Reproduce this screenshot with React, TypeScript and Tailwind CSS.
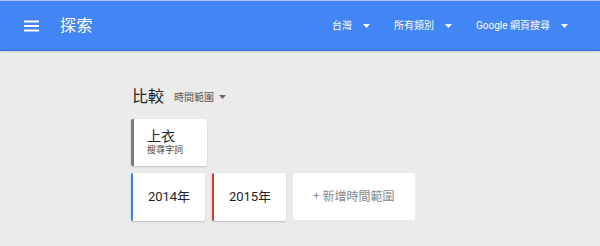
const nav = ['台灣', '所有類別', 'Google 網頁搜尋'];

const years = [
  { label: '2014年', color: 'border-[#3b7df2]' },
  { label: '2015年', color: 'border-[#d93a2e]' },
];

function Caret({ className = '' }: { className?: string }) {
  return (
    <svg width="7" height="4" viewBox="0 0 7 4" className={className}>
      <path d="M0 0h7L3.5 4z" fill="currentColor" />
    </svg>
  );
}

export default function App() {
  return (
    <div
      className="w-[600px] h-[246px] bg-[#ebebeb] overflow-hidden"
      style={{ fontFamily: 'Roboto, "Noto Sans CJK TC", sans-serif' }}
    >
      {/* Header */}
      <header className="h-[51px] bg-[#4285f4] border-t border-t-[#a9c5f7] border-b border-b-[#2f6fd9] flex items-center text-white shadow-[0_1px_2px_rgba(0,0,0,0.15)]">
        <div className="pl-[24px] pr-[21px] flex items-center">
          <svg width="15" height="12" viewBox="0 0 15 12">
            <rect x="0" y="0.5" width="15" height="2" fill="white" />
            <rect x="0" y="5" width="15" height="2" fill="white" />
            <rect x="0" y="9.5" width="15" height="2" fill="white" />
          </svg>
        </div>
        <span className="text-[16px] leading-none tracking-[0.5px]">探索</span>
        <nav className="ml-auto flex items-center pr-[32px] text-[10px]">
          {nav.map((n) => (
            <div key={n} className="flex items-center ml-[24px] first:ml-0">
              <span>{n}</span>
              <Caret className="ml-[11px]" />
            </div>
          ))}
        </nav>
      </header>

      <main className="pl-[131px] pt-[36px]">
        <div className="flex items-center text-[#222]">
          <span className="text-[16px] leading-[20px] pl-[1px]">比較</span>
          <span className="ml-[10px] text-[10px] text-[#555]">時間範圍</span>
          <Caret className="ml-[5px] text-[#666]" />
        </div>

        <div className="mt-[12px] w-[76px] h-[47px] bg-white rounded-[2px] border-l-[3px] border-[#7a7a7a] shadow-[0_1px_2px_rgba(0,0,0,0.2)] pl-[13px] pt-[9px]">
          <div className="text-[14px] leading-[16px] text-[#222]">上衣</div>
          <div className="text-[9px] leading-[13px] text-[#444]">搜尋字詞</div>
        </div>

        <div className="mt-[7px] flex gap-[7px]">
          {years.map((y) => (
            <div
              key={y.label}
              className={`w-[74px] h-[48px] bg-white rounded-[2px] border-l-[2px] ${y.color} shadow-[0_1px_2px_rgba(0,0,0,0.2)] flex items-center justify-center text-[13px] text-[#222]`}
            >
              {y.label}
            </div>
          ))}
          <div className="w-[122px] h-[47px] bg-white rounded-[3px] flex items-center justify-center text-[12px] text-[#888]">
            <span className="mr-[3px] text-[11px]">+</span>新增時間範圍
          </div>
        </div>
      </main>
    </div>
  );
}
